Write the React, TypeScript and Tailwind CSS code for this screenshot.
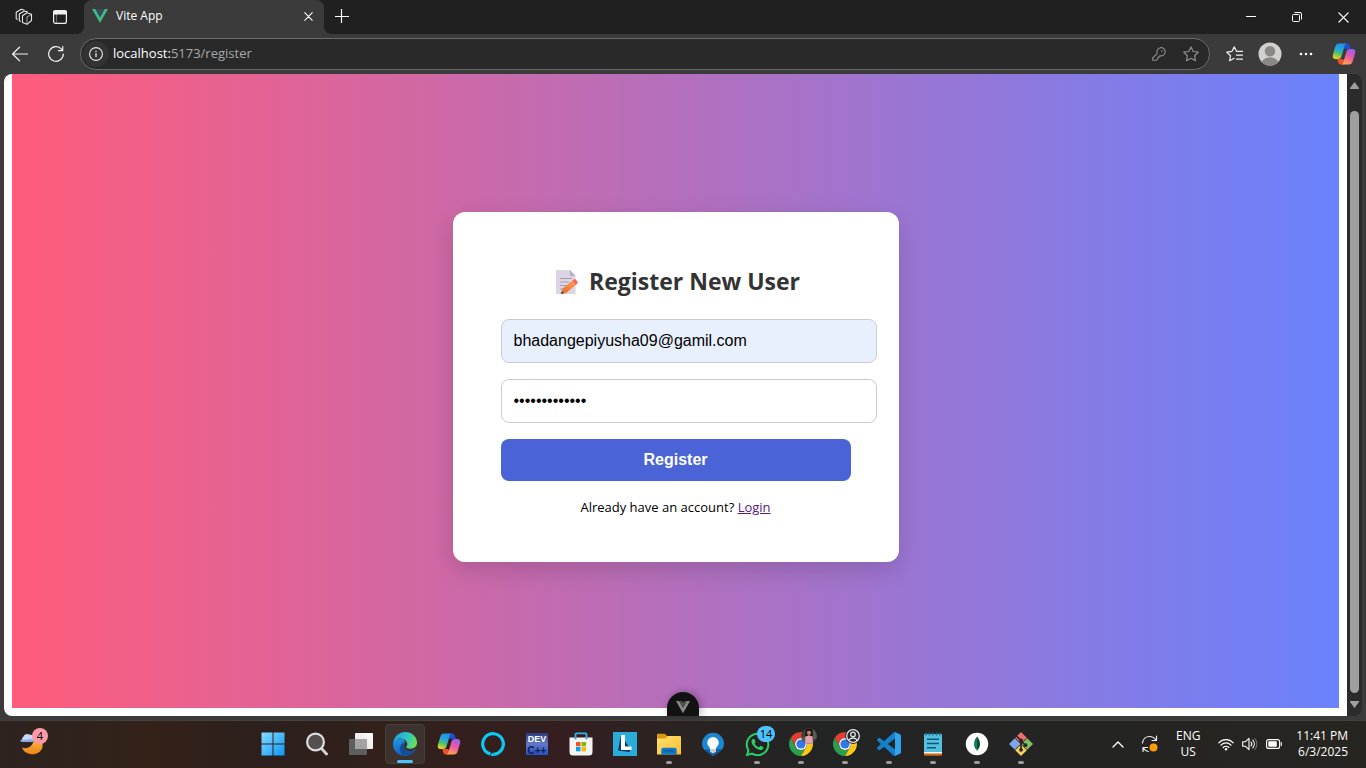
import React from "react";
import { FaWhatsapp } from "react-icons/fa";

type IconProps = { id?: string };

const WorkspacesIcon = () => (
  <svg width="18" height="18" viewBox="0 0 18 18" fill="none" stroke="#e8e8e8" strokeWidth="1.1" strokeLinejoin="round" strokeLinecap="round">
    <path d="M7.500 7.700 12 4.800l4.500 1.400v6.300L12 16.300 7.500 14.600z" />
    <path d="M12 16V9l4.300-2.600" opacity=".6" />
    <path d="M5.300 13.200 4.300 12.700V6L9.300 3l3 .9" />
    <path d="M2.300 11.300 1.200 10.800V4.200L6.200 1.200 9 2" />
  </svg>
);

const TabActionsIcon = () => (
  <svg width="16" height="16" viewBox="0 0 16 16" fill="none" stroke="#f2f2f2" strokeWidth="1.2">
    <rect x="1.600" y="1.600" width="12.800" height="12.800" rx="2" />
    <path d="M2 2h12v3H2z" fill="#f2f2f2" />
    <path d="M4.500 5v9" opacity=".35" />
  </svg>
);

const VueLogo = ({ outer = "#41b883", inner = "#35495e", size = 16 }: { outer?: string; inner?: string; size?: number }) => (
  <svg width={size} height={size} viewBox="0 0 16 16">
    <path d="M0 1h6.200L8 4l1.800-3H16L8 15z" fill={outer} />
    <path d="M3.200 1h3L8 4l1.800-3h3L8 9.500z" fill={inner} />
  </svg>
);

const CloseIcon = ({ size = 10 }: { size?: number }) => (
  <svg width={size} height={size} viewBox="0 0 10 10" stroke="#fff" strokeWidth="1.200" strokeLinecap="round">
    <path d="M.8.800l8.400 8.400M9.200.800.800 9.200" />
  </svg>
);

const CopilotIcon = ({ id }: IconProps) => (
  <svg width="24" height="24" viewBox="0 0 24 24">
    <defs>
      <linearGradient id={id + "a"} x1=".6" y1="0" x2=".3" y2="1">
        <stop offset="0" stopColor="#1c8fe8" />
        <stop offset=".4" stopColor="#27a9dc" />
        <stop offset=".65" stopColor="#4fc16b" />
        <stop offset="1" stopColor="#f2d51e" />
      </linearGradient>
      <linearGradient id={id + "b"} x1=".7" y1="0" x2=".3" y2="1">
        <stop offset="0" stopColor="#9d5cf0" />
        <stop offset=".5" stopColor="#ee5aa0" />
        <stop offset="1" stopColor="#ffa64d" />
      </linearGradient>
    </defs>
    <path d="M12 1.500h3.200c1.500 0 2.200.800 2.600 2.200l1 3.300h-4.600c-1.500 0-2.400-1-2.800-2.500z" fill="#1d4fd0" />
    <path d="M12 22.500H8.800c-1.500 0-2.200-.800-2.600-2.200l-1-3.300h4.600c1.500 0 2.400 1 2.800 2.500z" fill="#f0502e" />
    <path d="M7 1.500h7.800c-1.300.300-1.800 1.100-2.200 2.500L9.600 14c-.7 2.200-1.600 3-3.600 3H3.600c-2.500 0-3.400-1.800-2.700-4.200l2.400-8C4 2.500 5 1.500 7 1.500z" fill={`url(#${id}a)`} />
    <path d="M17 22.500H9.200c1.300-.3 1.800-1.100 2.200-2.500l3-10c.7-2.200 1.600-3 3.600-3h2.400c2.500 0 3.400 1.800 2.700 4.200l-2.400 8c-.7 2.300-1.700 3.300-3.700 3.300z" fill={`url(#${id}b)`} />
  </svg>
);

const WindowsIcon = () => (
  <svg width="24" height="24" viewBox="0 0 24 24">
    <defs>
      <linearGradient id="win" x1="0" y1="0" x2="1" y2="1" gradientUnits="objectBoundingBox">
        <stop offset="0" stopColor="#86dcff" />
        <stop offset="1" stopColor="#0c96f8" />
      </linearGradient>
    </defs>
    <path d="M.5.500h11v11H.5zM12.500.500h11v11h-11zM.5 12.500h11v11H.5zM12.500 12.500h11v11h-11z" fill="url(#win)" />
  </svg>
);

const SearchIcon = () => (
  <svg width="24" height="24" viewBox="0 0 24 24">
    <path d="M16.500 16.500 21.500 22" stroke="#cfcfd4" strokeWidth="3" strokeLinecap="round" />
    <circle cx="10.500" cy="10" r="8.400" fill="#54504e" stroke="#dedee2" strokeWidth="2.200" />
  </svg>
);

const TaskViewIcon = () => (
  <svg width="24" height="24" viewBox="0 0 24 24">
    <defs>
      <linearGradient id="tv" x1="0" y1="1" x2="1" y2="0">
        <stop offset="0" stopColor="#dcdcdc" />
        <stop offset="1" stopColor="#fff" />
      </linearGradient>
    </defs>
    <rect x="6" y="1" width="18" height="16" rx="1" fill="url(#tv)" />
    <rect x="0" y="7" width="18" height="16" rx="1" fill="#5e5e5e" />
    <path d="M6 7h12v10H6z" fill="#a3a3a3" />
  </svg>
);

const EdgeIcon = () => (
  <svg width="24" height="24" viewBox="0 0 24 24">
    <defs>
      <linearGradient id="edgeTop" x1="0" y1=".3" x2="1" y2=".6">
        <stop offset="0" stopColor="#1e9fdf" />
        <stop offset=".55" stopColor="#31c6c4" />
        <stop offset="1" stopColor="#6be04f" />
      </linearGradient>
      <linearGradient id="edgeMid" x1="0" y1="0" x2=".4" y2="1">
        <stop offset="0" stopColor="#2199e4" />
        <stop offset="1" stopColor="#0f5cbd" />
      </linearGradient>
    </defs>
    <path d="M0 12C0 8 4 6 8.500 6.800 12 7.500 13 10 10.500 13c-.5 6 6 7.500 11.700 4.500.3-.1.500.200.300.500C20.500 21.500 16.500 24 12 24 5 24 0 18.500 0 12z" fill="url(#edgeMid)" />
    <path d="M9.900 22.700C6.500 20.500 5.800 15 8.800 12c1-1 1.900-1.300 2.600-1.200-1.500 1.500-1.500 4 .1 6 2.400 3 7 3.200 10.700.7.300-.1.500.200.300.500-2.900 4.400-7.900 6.800-12.600 4.700z" fill="#134d94" />
    <path d="M0 11.500C.6 5 5.700 0 12 0c7.200 0 12 5 12 10.500 0 4-3 6.200-6.500 6.200-3.200 0-4.700-1.200-4.200-2 .4-.6 1-1.200 1-2.700 0-2.800-3-5.600-7-5.600C3.500 6.400.6 8.700 0 11.500z" fill="url(#edgeTop)" />
  </svg>
);

const AlexaIcon = () => (
  <svg width="24" height="24" viewBox="0 0 24 24">
    <path d="M9.500 21.990A10.300 10.300 0 1 1 12.500 22.290" fill="none" stroke="#0bc9f7" strokeWidth="3.200" />
    <path d="M12.200 20.700c-1.500.300-2.300 1.200-2.200 3.200 1 .1 2 .1 3-.1z" fill="#0bc9f7" />
  </svg>
);

const DevCppIcon = () => (
  <svg width="24" height="24" viewBox="0 0 24 24">
    <defs>
      <linearGradient id="dev" x1="0" y1="0" x2="0" y2="1">
        <stop offset="0" stopColor="#2b3a80" />
        <stop offset=".5" stopColor="#6579c4" />
        <stop offset="1" stopColor="#2450c4" />
      </linearGradient>
    </defs>
    <rect x="1" y="1" width="22" height="22" fill="url(#dev)" />
    <text x="12" y="10" textAnchor="middle" fontFamily="Liberation Sans" fontWeight="700" fontSize="9" fill="#fff">DEV</text>
    <text x="12" y="21.500" textAnchor="middle" fontFamily="Liberation Sans" fontWeight="700" fontSize="10" fill="#0c1c55">C++</text>
  </svg>
);

const StoreIcon = () => (
  <svg width="24" height="24" viewBox="0 0 24 24">
    <path d="M6.500 6.500V2.200c0-.6.300-.9.900-.9h9.200c.6 0 .9.300.9.900v4.300" fill="none" stroke="#30b4e8" strokeWidth="1.800" />
    <path d="M.5 5.500h23V20a3.500 3.500 0 0 1-3.500 3.500H4A3.500 3.500 0 0 1 .5 20z" fill="#f3f3f3" />
    <path d="M6.500 5.500v1.800M17.500 5.500v1.800" stroke="#1d86c0" strokeWidth="1.800" />
    <path d="M7 10h4.500v4.300H7z" fill="#f25022" />
    <path d="M12.500 10H17v4.300h-4.500z" fill="#7fba00" />
    <path d="M7 15h4.500v4.300H7z" fill="#00a4ef" />
    <path d="M12.500 15H17v4.300h-4.500z" fill="#ffb900" />
  </svg>
);

const LIcon = () => (
  <svg width="24" height="24" viewBox="0 0 24 24">
    <rect width="24" height="24" fill="#29add8" />
    <path d="M8 3 5 18.500l11 1.500 2-2z" fill="#12386b" />
    <path d="M8 3h4v11.500h6.500V18H8z" fill="#fff" />
  </svg>
);

const FolderIcon = () => (
  <svg width="24" height="24" viewBox="0 0 24 24">
    <defs>
      <linearGradient id="folder" x1="0" y1="0" x2="1" y2="1">
        <stop offset="0" stopColor="#ffdf72" />
        <stop offset="1" stopColor="#fdbf2c" />
      </linearGradient>
    </defs>
    <path d="M0 3c0-.8.500-1.300 1.300-1.300h6.500l2.400 2.400V9H0z" fill="#d99a10" />
    <path d="M0 6.500h8.500l2-2.400h12.200c.8 0 1.300.5 1.300 1.300v17.200H0z" fill="url(#folder)" />
    <path d="M4.300 22.600V18c0-1.400.9-2.300 2.300-2.300h10.800c1.400 0 2.300.9 2.300 2.300v4.600z" fill="#1178c8" />
    <path d="M7 18.800h10" stroke="#0a5596" strokeWidth="1.200" />
  </svg>
);

const BulbIcon = () => (
  <svg width="24" height="24" viewBox="0 0 24 24">
    <path d="M12 .800A11 11 0 0 1 23 11.800c0 4-2.500 7-5.500 8.500L12 24l-5.500-3.700C3.500 18.800 1 15.800 1 11.800A11 11 0 0 1 12 .800z" fill="#1a87d2" />
    <path d="M3 17.500c2 2 3.800 3 5 3.800L12 24l5.500-3.700L21 17z" fill="#0e5f9f" />
    <path d="M12 5a5.800 5.800 0 0 1 5.800 5.800c0 2.900-2.500 3.700-2.800 6.200H9c-.3-2.500-2.800-3.300-2.800-6.200A5.800 5.800 0 0 1 12 5z" fill="#fafafa" />
    <path d="M9 17h6v2.800L12 21.500l-3-1.700z" fill="#c4ced6" />
  </svg>
);

const ChromeIcon = () => (
  <svg width="24" height="24" viewBox="0 0 24 24">
    <path d="M1.610 6A12 12 0 0 1 22.390 6H12A6 6 0 0 0 6.800 15z" fill="#e23e31" />
    <path d="M1.610 6 6.800 15A6 6 0 0 0 17.200 15L12 24A12 12 0 0 1 1.610 6z" fill="#2b9f4d" />
    <path d="M22.390 6H12a6 6 0 0 1 5.200 9L12 24A12 12 0 0 0 22.390 6z" fill="#fbc816" />
    <circle cx="12" cy="12" r="5.900" fill="#fff" />
    <circle cx="12" cy="12" r="4.600" fill="#3478e5" />
  </svg>
);

const PhotoBadge = () => (
  <svg width="16" height="16" viewBox="0 0 16 16">
    <defs>
      <clipPath id="pb"><circle cx="8" cy="8" r="7.800" /></clipPath>
    </defs>
    <g clipPath="url(#pb)">
      <rect width="16" height="16" fill="#3d4238" />
      <path d="M0 9h5v7H0zM12 2h4v9h-4z" fill="#5b5a4c" />
      <path d="M5 1h6l1 7H4z" fill="#1f1512" />
      <circle cx="8" cy="4.800" r="2.100" fill="#b98470" />
      <path d="M4 16 4.500 8.500 8 7.300l3.500 1.200L12 16z" fill="#e79fb4" />
    </g>
  </svg>
);

const UserBadge = () => (
  <svg width="16" height="16" viewBox="0 0 16 16" fill="none" stroke="#e3e5e8" strokeWidth="1.300">
    <circle cx="8" cy="8" r="7.900" fill="#22252a" stroke="none" />
    <circle cx="8" cy="8" r="6.300" />
    <circle cx="8" cy="6.400" r="2.300" />
    <path d="M3.600 12.300c1.200-1.700 2.700-2.300 4.400-2.300s3.200.6 4.400 2.300" />
  </svg>
);

const VsCodeIcon = () => (
  <svg width="24" height="24" viewBox="0 0 24 24">
    <path d="M23.150 2.587L18.210.210a1.494 1.494 0 0 0-1.705.290l-9.460 8.630-4.120-3.128a.999.999 0 0 0-1.276.057L.327 7.261A1 1 0 0 0 .326 8.740L3.899 12 .326 15.260a1 1 0 0 0 .001 1.479L1.650 17.940a.999.999 0 0 0 1.276.057l4.120-3.128 9.460 8.630a1.492 1.492 0 0 0 1.704.290l4.942-2.377A1.500 1.500 0 0 0 24 20.060V3.939a1.500 1.500 0 0 0-.850-1.352zm-5.146 14.861L10.826 12l7.178-5.448v10.896z" fill="#1580cc" />
    <path d="M18 .150 23.150 2.587A1.500 1.500 0 0 1 24 3.940v16.120a1.500 1.500 0 0 1-.850 1.350L18 23.850z" fill="#30a2ee" />
  </svg>
);

const NotepadIcon = () => (
  <svg width="24" height="24" viewBox="0 0 24 24">
    <path d="M3 18h18v4.500c0 .8-.5 1.300-1.300 1.300H4.300c-.8 0-1.300-.5-1.300-1.300z" fill="#c8681c" />
    <path d="M3 18h18v3.500H3z" fill="#f4f4f4" />
    <path d="M3 3c0-.6.400-1 1-1h16c.6 0 1 .4 1 1v17H3z" fill="#55c0dd" />
    <path d="M5 .500v3M8.500.500v3M12 .500v3M15.500.500v3M19 .500v3" stroke="#1c6f92" strokeWidth="1.500" />
    <path d="M6 7.300h12M6 11.500h12M6 15.700h9" stroke="#0d5878" strokeWidth="1.500" />
  </svg>
);

const MongoIcon = () => (
  <svg width="24" height="24" viewBox="0 0 24 24">
    <circle cx="12" cy="12" r="11.200" fill="#fff" />
    <path d="M12 4.500c1.900 2.500 3 4.500 3 7.500s-1.100 4.600-2.700 6L12 20z" fill="#0b4a35" />
    <path d="M12 4.500c-1.900 2.500-3 4.500-3 7.500s1.100 4.600 2.700 6L12 20z" fill="#14834f" />
  </svg>
);

const GitIcon = () => (
  <svg width="24" height="24" viewBox="0 0 24 24">
    <path d="M12 0l5.800 5.800L12 11.600 6.200 5.800z" fill="#ee6f70" />
    <path d="M5.800 6.200 11.600 12l-5.800 5.800L0 12z" fill="#7ea6e8" />
    <path d="M18.200 6.200 24 12l-5.800 5.800L12.400 12z" fill="#82c160" />
    <path d="M12 12.400l5.800 5.800L12 24l-5.800-5.800z" fill="#f5d25c" />
    <path d="M7.500 4 12 8.500V18M12 9l4.500 4.500" stroke="#2a2422" strokeWidth="1.600" fill="none" />
    <circle cx="12" cy="8.500" r="1.900" fill="#2a2422" />
    <circle cx="12" cy="17.800" r="1.900" fill="#2a2422" />
    <circle cx="16.500" cy="13.200" r="1.900" fill="#2a2422" />
  </svg>
);

const WeatherIcon = () => (
  <svg width="24" height="24" viewBox="0 0 24 24">
    <defs>
      <linearGradient id="moon" x1="0" y1="0" x2="0" y2="1">
        <stop offset="0" stopColor="#f8bd40" />
        <stop offset="1" stopColor="#ee8418" />
      </linearGradient>
    </defs>
    <path d="M2 15.500c5 2.500 12-1 12-10 6 0 9.500 4.500 8.500 9.500-1.200 5-5.500 7.300-10 7.300S3.500 20 2 15.500z" fill="url(#moon)" />
    <path d="M3 9.800a3.800 3.800 0 0 1 .500-5.300A4 4 0 0 1 9 2.500 4.500 4.500 0 0 1 13 9.800z" fill="#c7d8f7" />
    <path d="M0 8c3-1 5 .5 8-.5s5 .3 6 .5c-.3 1.300-1.200 2.100-2.500 2.100H3C1.300 10.100.2 9.300 0 8z" fill="#8ba9e6" />
  </svg>
);

const NoteEmoji = () => (
  <svg className="h-6 w-8 shrink-0" viewBox="0 0 32 24" role="img" aria-label="memo">
    <defs>
      <linearGradient id="pencil" x1="1" y1="0" x2="0" y2="1">
        <stop offset="0" stopColor="#ff5a5a" />
        <stop offset=".25" stopColor="#ff6650" />
        <stop offset=".35" stopColor="#ff9046" />
        <stop offset="1" stopColor="#e06a2c" />
      </linearGradient>
    </defs>
    <path d="M5 0h14l5.500 6v18H5z" fill="#dcd5e5" />
    <path d="M19 0v6h5.500z" fill="#b5adc0" />
    <path d="M9 8.500h12M9 12h9M9 15.500h6M9 19h4" stroke="#a59daf" strokeWidth="1.100" />
    <path d="M23.200 9.200c.8-.6 3.200 1.900 3.500 3 .2.700-.2 1.200-.8 1.800L15.500 22.700l-5 1.200c-.5.100-.8-.200-.6-.700l2-5z" fill="url(#pencil)" />
    <path d="m20.600 11.200 3.800 4.200" stroke="#ffd0b0" strokeWidth="1" />
    <path d="m11 20.900 2 2.400-2.500.6c-.5.100-.8-.200-.6-.700z" fill="#6b4a45" />
  </svg>
);

const TitleBar = () => (
  <header className="flex h-[34px] shrink-0 items-stretch bg-[#202020]">
    <div className="flex flex-1 items-stretch pl-1.5">
      <button aria-label="Workspaces" className="flex w-9 items-center justify-center"><WorkspacesIcon /></button>
      <button aria-label="Tab actions menu" className="flex w-9 items-center justify-center"><TabActionsIcon /></button>
      <div className="relative ml-1.5 flex w-60 items-center rounded-t-lg bg-[#3b3b3b] px-2 pb-0.5">
        <span className="absolute bottom-0 -left-2 size-2 bg-[radial-gradient(circle_at_0_0,#202020_8px,#3b3b3b_8px)]" />
        <span className="absolute -right-2 bottom-0 size-2 bg-[radial-gradient(circle_at_100%_0,#202020_8px,#3b3b3b_8px)]" />
        <VueLogo />
        <span className="ml-2 flex-1 text-xs text-white">Vite App</span>
        <button aria-label="Close tab" className="flex size-4 items-center justify-center"><CloseIcon size={9} /></button>
      </div>
      <button aria-label="New tab" className="flex w-9 items-center justify-center pb-0.5">
        <svg width="14" height="14" viewBox="0 0 14 14" stroke="#fff" strokeWidth="1.200"><path d="M6.500 0v14M0 7.500h14" /></svg>
      </button>
    </div>
    <button aria-label="Minimize" className="flex w-[46px] items-center justify-center">
      <svg width="10" height="10" viewBox="0 0 10 10" stroke="#fff"><path d="M0 4.500h10" /></svg>
    </button>
    <button aria-label="Restore" className="flex w-[46px] items-center justify-center">
      <svg width="10" height="10" viewBox="0 0 10 10" fill="none" stroke="#fff">
        <rect x=".5" y="2.500" width="7" height="7" rx="1" />
        <path d="M2.500.500H8A1.500 1.500 0 0 1 9.500 2v5.500" />
      </svg>
    </button>
    <button aria-label="Close" className="flex w-[46px] items-center justify-center"><CloseIcon size={11} /></button>
  </header>
);

const STAR = "M8 .900l2.200 4.600 5 .7-3.600 3.500.9 5L8 12.300l-4.500 2.400.9-5L.8 6.200l5-.7z";

const Toolbar = () => (
  <div className="flex h-10 shrink-0 items-center bg-[#3b3b3b] pr-1 pl-0.5">
    <button aria-label="Back" className="flex size-9 items-center justify-center">
      <svg width="16" height="16" viewBox="0 0 16 16" fill="none" stroke="#f0f0f0" strokeWidth="1.200" strokeLinecap="round" strokeLinejoin="round"><path d="M15.500 8H.800M7.500 1.200.600 8l6.900 6.800" /></svg>
    </button>
    <button aria-label="Refresh" className="flex size-9 items-center justify-center">
      <svg width="16" height="16" viewBox="0 0 16 16" fill="none" stroke="#f0f0f0" strokeWidth="1.200" strokeLinecap="round" strokeLinejoin="round"><path d="M15.300 8A7.300 7.300 0 1 1 13.500 3.200L14.500 4.500M14.700.500v4.200h-4.200" /></svg>
    </button>
    <div className="ml-1.5 flex h-8 flex-1 items-center rounded-full border border-[#6b6b6b] bg-[#292929] pr-0.5">
      <button aria-label="View site information" className="ml-0.5 flex size-[26px] items-center justify-center rounded-full bg-[#333333]">
        <svg width="14" height="14" viewBox="0 0 14 14" fill="none" stroke="#e6e6e6" strokeWidth="1.100"><circle cx="7" cy="7" r="6.400" /><path d="M7 6v4M7 3.800v1.200" strokeWidth="1.300" /></svg>
      </button>
      <p className="ml-1 flex-1 text-[13px] text-[#a8a8a8]"><span className="text-white">localhost:</span>5173/register</p>
      <button aria-label="Save password" className="flex w-8 items-center justify-center">
        <svg width="14" height="14" viewBox="0 0 14 14" fill="none" stroke="#8d8d8d" strokeWidth="1.100" strokeLinejoin="round"><path d="M5.300 6.300A4.100 4.100 0 1 1 8 8.700L6.900 9.500v1.200H5.600v1.200L4.300 13.300H.7V11z" /><circle cx="10" cy="4" r=".8" fill="#8d8d8d" stroke="none" /></svg>
      </button>
      <button aria-label="Add to favorites" className="flex w-8 items-center justify-center">
        <svg width="16" height="16" viewBox="0 0 16 16" fill="none" stroke="#8d8d8d" strokeWidth="1.200" strokeLinejoin="round"><path d={STAR} /></svg>
      </button>
    </div>
    <button aria-label="Favorites" className="ml-1.5 flex size-9 items-center justify-center">
      <svg width="17" height="16" viewBox="0 0 17 16" fill="none" stroke="#f0f0f0" strokeWidth="1.200" strokeLinejoin="round" strokeLinecap="round"><path d="M10.500 5.300 8.300.900 6 5.300l-5.200.900 3.700 3.500-.9 5 4.600-2.400M10.500 5.300h6M10.500 9.200h6M10.500 13.200h6" /></svg>
    </button>
    <button aria-label="Profile" className="flex size-9 items-center justify-center">
      <svg width="24" height="24" viewBox="0 0 24 24">
        <defs><clipPath id="av"><circle cx="12" cy="12" r="11.500" /></clipPath></defs>
        <g clipPath="url(#av)"><rect width="24" height="24" fill="#d2d0ce" /><circle cx="12" cy="9.300" r="5.200" fill="#8a8886" /><ellipse cx="12" cy="21" rx="8.300" ry="5.800" fill="#8a8886" /></g>
      </svg>
    </button>
    <button aria-label="Settings and more" className="flex size-9 items-center justify-center">
      <svg width="14" height="4" viewBox="0 0 14 4" fill="#fff"><circle cx="2" cy="2" r="1.300" /><circle cx="7" cy="2" r="1.300" /><circle cx="12" cy="2" r="1.300" /></svg>
    </button>
    <button aria-label="Copilot" className="ml-0.5 flex size-9 items-center justify-center"><CopilotIcon id="cpA" /></button>
  </div>
);

const RegisterCard = () => (
  <form className="w-[446px] rounded-xl bg-white px-12 pt-12 pb-11 shadow-[0_8px_24px_rgba(0,0,0,0.15)]" onSubmit={(e: React.FormEvent) => e.preventDefault()}>
    <h2 className="flex h-[43px] items-center justify-center gap-1.5 text-[23px] font-bold whitespace-nowrap text-[#333333]">
      <NoteEmoji />
      Register New User
    </h2>
    <input
      aria-label="Email"
      type="email"
      defaultValue="bhadangepiyusha09@gamil.com"
      className="mt-4 block h-11 w-[376px] rounded-lg border border-[#cccccc] bg-[#e8f0fe] px-3 font-['Liberation_Sans',sans-serif] text-base text-black"
    />
    <input
      aria-label="Password"
      type="password"
      defaultValue="password12345"
      className="mt-4 block h-11 w-[376px] rounded-lg border border-[#cccccc] bg-white px-3 font-['Liberation_Sans',sans-serif] text-base text-black"
    />
    <button type="submit" className="mt-4 block h-[42px] w-full rounded-lg bg-[#4a63d7] font-['Liberation_Sans',sans-serif] text-base font-bold text-white">
      Register
    </button>
    <p className="mt-4 text-center text-[13px] leading-[21px] text-black">
      Already have an account? <a href="#login" className="text-[#551a8b] underline">Login</a>
    </p>
  </form>
);

const PageView = () => (
  <div className="relative mx-1 mb-1 flex flex-1">
    <main className="flex flex-1 rounded-l-lg bg-white px-2 pb-2">
      <div className="flex flex-1 items-center justify-center bg-linear-to-r/srgb from-[#ff5c7c] to-[#6a82fd] pb-2">
        <RegisterCard />
      </div>
    </main>
    <div className="flex w-[15px] flex-col items-center rounded-r-lg bg-[#2b2b2b] py-2">
      <svg width="9" height="7" viewBox="0 0 9 7" fill="#9f9f9f"><path d="M4.500 0 9 6v1H0V6z" /></svg>
      <div className="mt-[22px] mb-2 w-[9px] flex-1 rounded-full bg-[#9f9f9f]" />
      <svg width="9" height="7" viewBox="0 0 9 7" fill="#9f9f9f"><path d="M4.500 7 9 1V0H0v1z" /></svg>
    </div>
    <button aria-label="Toggle Vue DevTools" className="absolute bottom-0 left-1/2 flex h-6 w-8 -translate-x-1/2 items-center justify-center rounded-t-full bg-[#121212] pt-1.5 shadow-[2px_0_8px_rgba(0,0,0,0.3)]">
      <VueLogo outer="#8a8a8a" inner="#4c4c4c" size={14} />
    </button>
  </div>
);

type TaskItem = { name: string; icon: React.ReactNode; state?: "active" | "open"; badge?: React.ReactNode };

const TASKS: TaskItem[] = [
  { name: "Start", icon: <WindowsIcon /> },
  { name: "Search", icon: <SearchIcon /> },
  { name: "Task View", icon: <TaskViewIcon /> },
  { name: "Microsoft Edge", icon: <EdgeIcon />, state: "active" },
  { name: "Copilot", icon: <CopilotIcon id="cpB" /> },
  { name: "Alexa", icon: <AlexaIcon /> },
  { name: "Dev-C++", icon: <DevCppIcon /> },
  { name: "Microsoft Store", icon: <StoreIcon /> },
  { name: "L", icon: <LIcon /> },
  { name: "File Explorer", icon: <FolderIcon />, state: "open" },
  { name: "Tips", icon: <BulbIcon /> },
  {
    name: "WhatsApp",
    icon: <FaWhatsapp size={27} color="#25d366" />,
    state: "open",
    badge: <span className="absolute top-0.5 right-0.5 flex h-4 w-[18px] items-center justify-center rounded-full bg-[#4cc2ff] text-[11px] text-black">14</span>,
  },
  { name: "Google Chrome", icon: <ChromeIcon />, state: "open", badge: <span className="absolute top-1 right-1"><PhotoBadge /></span> },
  { name: "Google Chrome guest", icon: <ChromeIcon />, state: "open", badge: <span className="absolute top-1 right-1"><UserBadge /></span> },
  { name: "Visual Studio Code", icon: <VsCodeIcon />, state: "open" },
  { name: "Notepad", icon: <NotepadIcon />, state: "open" },
  { name: "MongoDB Compass", icon: <MongoIcon />, state: "open" },
  { name: "Git Bash", icon: <GitIcon />, state: "open" },
];

const Taskbar = () => (
  <footer className="flex h-12 shrink-0 items-stretch border-t border-[#45413e] bg-[linear-gradient(to_right,#2d231f_0%,#332218_11%,#2c1f1c_19%,#32211b_28%,#341e20_41%,#2a2322_50%,#232424_60%,#242423_80%,#272520_100%)] pb-px text-white">
    <div className="flex flex-1 items-center pl-5">
      <button aria-label="Weather" className="relative flex">
        <WeatherIcon />
        <span className="absolute -top-1 -right-1 flex size-4 items-center justify-center rounded-full bg-[#ff99a4] text-[11px] text-black">4</span>
      </button>
    </div>
    <nav className="flex items-center">
      {TASKS.map((t) => (
        <button
          key={t.name}
          aria-label={t.name}
          className={`relative mx-0.5 flex size-10 items-center justify-center rounded ${t.state === "active" ? "border border-[#47403c] bg-[#3d322d]" : ""}`}
        >
          {t.icon}
          {t.badge}
          {t.state === "active" && <span className="absolute bottom-0 h-[3px] w-4 rounded-full bg-[#4cc2ff]" />}
          {t.state === "open" && <span className="absolute bottom-0 h-[3px] w-1.5 rounded-full bg-[#9b9b9b]" />}
        </button>
      ))}
    </nav>
    <div className="flex w-[323px] items-center justify-end pr-[18px] text-xs">
      <button aria-label="Show hidden icons" className="flex w-8 items-center justify-center">
        <svg width="12" height="7" viewBox="0 0 12 7" fill="none" stroke="#fff" strokeWidth="1.400" strokeLinecap="round" strokeLinejoin="round"><path d="M1 6l5-5 5 5" /></svg>
      </button>
      <button aria-label="Windows Update" className="flex w-8 items-center justify-center">
        <svg width="18" height="18" viewBox="0 0 18 18" fill="none" stroke="#f0f0f0" strokeWidth="1.200" strokeLinecap="round" strokeLinejoin="round"><path d="M1.500 8C2 4 5 1.500 8.500 1.500c2.800 0 5 1.300 6.300 3.500M15.500 1v4.500H11M2 16.500V12.500h4.500M2.300 13c1.200 2 3 3.200 5 3.500" /><circle cx="12.500" cy="12.500" r="4" fill="#ff9a0a" stroke="none" /></svg>
      </button>
      <button className="w-11 text-center leading-4">ENG<br />US</button>
      <button aria-label="Network, volume and battery" className="ml-0.5 flex w-[76px] items-center justify-center gap-2">
        <svg width="16" height="13" viewBox="0 0 16 13" fill="none" stroke="#fff" strokeWidth="1.200" strokeLinecap="round"><path d="M.8 4.800c4-4.300 10.400-4.300 14.400 0M3 7.200c2.800-3 7.200-3 10 0M5.200 9.500c1.600-1.700 4-1.700 5.600 0" /><circle cx="8" cy="11.300" r="1.200" fill="#fff" stroke="none" /></svg>
        <svg width="16" height="14" viewBox="0 0 16 14" fill="none" stroke="#fff" strokeWidth="1.100" strokeLinecap="round" strokeLinejoin="round"><path d="M.7 4.800h2.600L7 1.300v11.400L3.300 9.200H.7zM9 5c1 1.200 1 2.800 0 4M10.800 3.200c2 2.200 2 5.400 0 7.600" /><path d="M12.800 1.500c2.800 3.200 2.800 7.800 0 11" opacity=".35" /></svg>
        <svg width="16" height="10" viewBox="0 0 16 10" fill="none" stroke="#fff" strokeWidth="1.100"><rect x=".6" y=".6" width="13" height="8.800" rx="2" /><rect x="2.300" y="2.300" width="8.500" height="5.400" rx=".8" fill="#fff" stroke="none" /><path d="M15.300 3.500v3" strokeLinecap="round" /></svg>
      </button>
      <button className="ml-2 text-right leading-4 whitespace-nowrap">11:41 PM<br />6/3/2025</button>
    </div>
  </footer>
);

export default function App() {
  return (
    <div className="flex min-h-screen flex-col bg-[#3b3b3b] font-['Open_Sans','Noto_Sans',sans-serif]">
      <TitleBar />
      <Toolbar />
      <PageView />
      <Taskbar />
    </div>
  );
}
